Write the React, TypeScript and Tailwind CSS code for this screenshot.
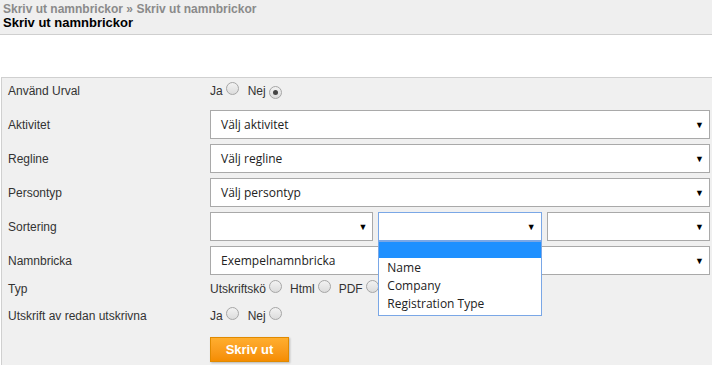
import React from "react"

function Radio({ checked = false }: { checked?: boolean }) {
  return (
    <span className="inline-flex h-[13px] w-[13px] items-center justify-center rounded-full border border-[#a6a6a6] bg-gradient-to-b from-[#f2f2f2] to-[#dcdcdc]">
      {checked && <span className="h-[5px] w-[5px] rounded-full bg-[#444]" />}
    </span>
  )
}

function Select({ value = "", focused = false, className = "" }: { value?: string; focused?: boolean; className?: string }) {
  return (
    <div
      className={`flex h-[29px] min-w-0 items-center justify-between bg-white pl-[10px] pr-[5px] font-['Open_Sans',sans-serif] text-[12px] text-[#222] ${
        focused ? "border border-[#7aa7e6]" : "border border-[#a9a9a9]"
      } ${className}`}
    >
      <span>{value}</span>
      <span className="text-[9px] leading-none text-black">▼</span>
    </div>
  )
}

function Row({ label, children, className = "" }: { label: string; children: React.ReactNode; className?: string }) {
  return (
    <div className={`flex items-center ${className}`}>
      <div className="w-[208px] shrink-0 pl-[6px] text-[12px] text-[#333]">{label}</div>
      {children}
    </div>
  )
}

export default function App() {
  return (
    <div className="h-[365px] w-[712px] overflow-hidden bg-white font-['Liberation_Sans',Arial,sans-serif]">
      {/* Header */}
      <header className="h-[35px] border-b border-[#cfcfcf] bg-[#efefef] px-[3px] pt-[2px] font-bold leading-[14px]">
        <div className="text-[12px] text-[#8a8a8a]">Skriv ut namnbrickor » Skriv ut namnbrickor</div>
        <div className="text-[13px] text-black">Skriv ut namnbrickor</div>
      </header>

      <div className="h-[42px]" />

      {/* Form */}
      <div className="relative ml-px h-[300px] border-l border-t border-[#d0d0d0] bg-[#f0f0f0] pr-[2px]">
        <Row label="Använd Urval" className="h-[26px]">
          <div className="flex items-center text-[12px] text-[#333]">
            <span>Ja</span>
            <span className="ml-[3px]"><Radio /></span>
            <span className="ml-[9px]">Nej</span>
            <span className="ml-[3px]"><Radio checked /></span>
          </div>
        </Row>

        <div className="mt-[6px] flex flex-col gap-[5px]">
          <Row label="Aktivitet">
            <Select value="Välj aktivitet" className="flex-1" />
          </Row>
          <Row label="Regline">
            <Select value="Välj regline" className="flex-1" />
          </Row>
          <Row label="Persontyp">
            <Select value="Välj persontyp" className="flex-1" />
          </Row>
          <Row label="Sortering">
            <div className="grid flex-1 grid-cols-3 gap-[5px]">
              <Select />
              <div className="relative min-w-0">
                <Select focused />
                <ul className="absolute left-0 right-0 top-[29px] z-10 border border-[#7aa7e6] bg-white font-['Open_Sans',sans-serif] text-[12px] leading-[18px] text-[#222]">
                  <li className="h-[16px] bg-[#1e90ff]" />
                  <li className="pl-[8px] pt-[1px]">Name</li>
                  <li className="pl-[8px]">Company</li>
                  <li className="pl-[8px] pb-[2px]">Registration Type</li>
                </ul>
              </div>
              <Select />
            </div>
          </Row>
          <Row label="Namnbricka">
            <Select value="Exempelnamnbricka" className="flex-1" />
          </Row>
        </div>

        <Row label="Typ" className="mt-[5px] h-[18px]">
          <div className="flex items-center text-[12px] text-[#333]">
            <span>Utskriftskö</span>
            <span className="ml-[3px]"><Radio /></span>
            <span className="ml-[8px]">Html</span>
            <span className="ml-[3px]"><Radio /></span>
            <span className="ml-[8px]">PDF</span>
            <span className="ml-[3px]"><Radio /></span>
          </div>
        </Row>

        <Row label="Utskrift av redan utskrivna" className="mt-[9px] h-[18px]">
          <div className="flex items-center text-[12px] text-[#333]">
            <span>Ja</span>
            <span className="ml-[3px]"><Radio /></span>
            <span className="ml-[9px]">Nej</span>
            <span className="ml-[3px]"><Radio /></span>
          </div>
        </Row>

        <div className="mt-[12px] pl-[208px]">
          <button className="h-[25px] w-[79px] border border-[#e08a00] bg-gradient-to-b from-[#ffae2e] to-[#f58d00] text-[13px] font-bold text-white shadow-[1px_1px_2px_rgba(0,0,0,0.25)]">
            Skriv ut
          </button>
        </div>
      </div>
    </div>
  )
}
